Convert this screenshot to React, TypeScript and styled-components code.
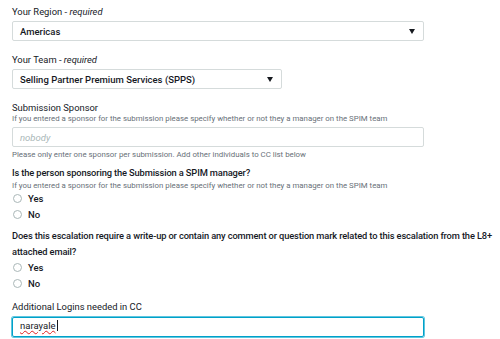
import styled, { createGlobalStyle } from 'styled-components';

const GlobalStyle = createGlobalStyle`
  body {
    margin: 0;
    background: #ffffff;
    font-family: Roboto, 'Liberation Sans', sans-serif;
    color: #16191f;
  }
`;

const Form = styled.div`
  display: flex;
  flex-direction: column;
  width: 488px;
  padding: 6px 0 0 12px;
`;

const Field = styled.div<{ gap?: number }>`
  display: flex;
  flex-direction: column;
  margin-bottom: ${(p) => p.gap ?? 13}px;
`;

const Label = styled.div`
  font-size: 9.4px;
  line-height: 12px;
  color: #16191f;
`;

const Question = styled.div`
  font-size: 9.3px;
  line-height: 16px;
  font-weight: 500;
  letter-spacing: -0.13px;
  color: #16191f;
`;

const Required = styled.i`
  font-style: italic;
`;

const Hint = styled.div`
  font-size: 7.85px;
  line-height: 10px;
  color: #687078;
`;

const Select = styled.div<{ w: number }>`
  display: flex;
  align-items: center;
  justify-content: space-between;
  box-sizing: border-box;
  width: ${(p) => p.w}px;
  height: 20px;
  margin-top: 3px;
  padding: 0 8px 0 7px;
  border: 1px solid #d5dbdb;
  border-radius: 2px;
  font-size: 9.5px;
  font-weight: 500;
  color: #16191f;
`;

const Caret = styled.span`
  width: 0;
  height: 0;
  border-left: 3.5px solid transparent;
  border-right: 3.5px solid transparent;
  border-top: 5px solid #16191f;
`;

const Input = styled.div<{ focused?: boolean }>`
  display: flex;
  align-items: center;
  box-sizing: border-box;
  width: 412px;
  height: 20px;
  margin: ${(p) => (p.focused ? '4px 0 0' : '3px 0')};
  padding: ${(p) => (p.focused ? '0 7px 3px' : '0 7px')};
  border: 1px solid ${(p) => (p.focused ? '#00a1c9' : '#d5dbdb')};
  box-shadow: ${(p) => (p.focused ? '0 0 0 1px #5fc6df' : 'none')};
  border-radius: 2px;
  font-size: 9.5px;
`;

const Placeholder = styled.span`
  font-style: italic;
  color: #aab7b8;
`;

const Typed = styled.span`
  color: #16191f;
  line-height: 11px;
  text-decoration: underline wavy #e02020;
  text-decoration-thickness: 1px;
  text-underline-offset: 1px;
  border-right: 1px solid #16191f;
  padding-right: 1px;
`;

const Radios = styled.div`
  display: flex;
  flex-direction: column;
  margin-top: -1px;
`;

const RadioRow = styled.div`
  display: flex;
  align-items: center;
  gap: 6px;
  height: 16px;
  font-size: 9.5px;
  font-weight: 500;
`;

const Circle = styled.span`
  box-sizing: border-box;
  width: 9px;
  height: 9px;
  margin-left: 1px;
  border: 1px solid #aab7b8;
  border-radius: 50%;
`;

function Radio({ label }: { label: string }) {
  return (
    <RadioRow>
      <Circle />
      {label}
    </RadioRow>
  );
}

const sponsorHint =
  'If you entered a sponsor for the submission please specify whether or not they a manager on the SPIM team';

export default function App() {
  return (
    <>
      <GlobalStyle />
      <Form>
        <Field>
          <Label>
            Your Region - <Required>required</Required>
          </Label>
          <Select w={412}>
            Americas
            <Caret />
          </Select>
        </Field>
        <Field>
          <Label>
            Your Team - <Required>required</Required>
          </Label>
          <Select w={270}>
            Selling Partner Premium Services (SPPS)
            <Caret />
          </Select>
        </Field>
        <Field gap={5}>
          <Label>Submission Sponsor</Label>
          <Hint>{sponsorHint}</Hint>
          <Input>
            <Placeholder>nobody</Placeholder>
          </Input>
          <Hint>Please only enter one sponsor per submission. Add other individuals to CC list below</Hint>
        </Field>
        <Field gap={6}>
          <Question>Is the person sponsoring the Submission a SPIM manager?</Question>
          <Hint>{sponsorHint}</Hint>
          <Radios>
            <Radio label="Yes" />
            <Radio label="No" />
          </Radios>
        </Field>
        <Field gap={10}>
          <Question>
            Does this escalation require a write-up or contain any comment or question mark related to this escalation from the L8+ attached email?
          </Question>
          <Radios>
            <Radio label="Yes" />
            <Radio label="No" />
          </Radios>
        </Field>
        <Field>
          <Label>Additional Logins needed in CC</Label>
          <Input focused>
            <Typed>narayale</Typed>
          </Input>
        </Field>
      </Form>
    </>
  );
}
